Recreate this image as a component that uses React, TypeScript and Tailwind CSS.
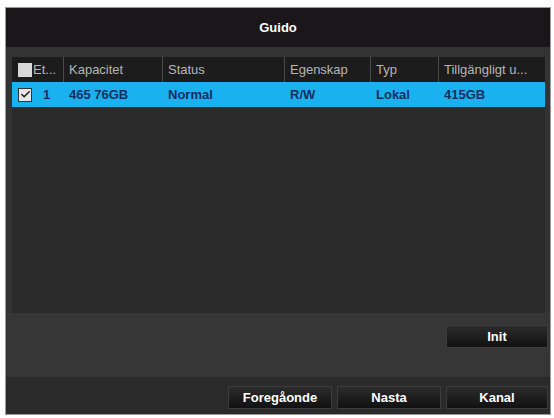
import { Check } from "lucide-react";

const cols = [
  { label: "Et...", w: "w-[51px]" },
  { label: "Kapacitet", w: "w-[99px]" },
  { label: "Status", w: "w-[122px]" },
  { label: "Egenskap", w: "w-[86px]" },
  { label: "Typ", w: "w-[68px]" },
  { label: "Tillgängligt u...", w: "w-[107px]" },
];

const row = ["1", "465 76GB", "Normal", "R/W", "Lokal", "415GB"];

const Btn = ({ label, w }: { label: string; w: string }) => (
  <div
    className={`${w} h-[23px] flex items-center justify-center border border-[#3c3c3c] bg-gradient-to-b from-[#2c2c2c] to-[#111111] text-white text-[13px] font-bold`}
  >
    {label}
  </div>
);

const App = () => {
  return (
    <div
      className="w-[554px] h-[418px] bg-white pt-[7px] pl-[5px]"
      style={{ fontFamily: '"Liberation Sans", Arial, sans-serif' }}
    >
      <div className="w-[546px] h-[408px] border border-[#9a9a9a] flex flex-col bg-[#333333]">
        {/* title */}
        <div className="h-[39px] bg-[#1a1619] flex items-center justify-center text-white text-[13px] font-bold">
          Guido
        </div>

        {/* table */}
        <div className="pt-[10px] pl-[6px]">
          <div className="w-[533px] h-[256px] bg-[#2a2a2a]">
            <div className="flex h-[25px] bg-[#1c1c1c] text-[#b5b5b5] text-[13px]">
              {cols.map((c, i) => (
                <div
                  key={c.label}
                  className={`${c.w} flex items-center overflow-hidden whitespace-nowrap ${
                    i === 0 ? "pl-[6px]" : "pl-[5px] border-l border-[#4a4a4a]"
                  }`}
                >
                  {i === 0 && (
                    <span className="w-[14px] h-[14px] bg-[#d8d8d8] mr-[1px] shrink-0" />
                  )}
                  {c.label}
                </div>
              ))}
            </div>
            <div className="flex h-[25px] bg-[#19b1f0] text-[#13305a] text-[13px] font-bold">
              {row.map((v, i) => (
                <div
                  key={i}
                  className={`${cols[i].w} flex items-center whitespace-nowrap ${
                    i === 0 ? "pl-[6px]" : "pl-[5px] border-l border-transparent"
                  }`}
                >
                  {i === 0 && (
                    <span className="w-[14px] h-[14px] bg-[#e6e6e6] border border-[#333] flex items-center justify-center mr-[11px] shrink-0">
                      <Check size={11} strokeWidth={3.5} color="#222" />
                    </span>
                  )}
                  {v}
                </div>
              ))}
            </div>
          </div>
        </div>

        {/* init area */}
        <div className="h-[64px] bg-[#363636] flex justify-end items-start pt-[12px] pr-[2px]">
          <Btn label="Init" w="w-[102px]" />
        </div>

        {/* footer */}
        <div className="flex-1 bg-[#2a2a2a] flex justify-end items-start gap-[5px] pt-[9px] pr-[2px]">
          <Btn label="Foregåonde" w="w-[104px]" />
          <Btn label="Nasta" w="w-[104px]" />
          <Btn label="Kanal" w="w-[102px]" />
        </div>
      </div>
    </div>
  );
};

export default App;
